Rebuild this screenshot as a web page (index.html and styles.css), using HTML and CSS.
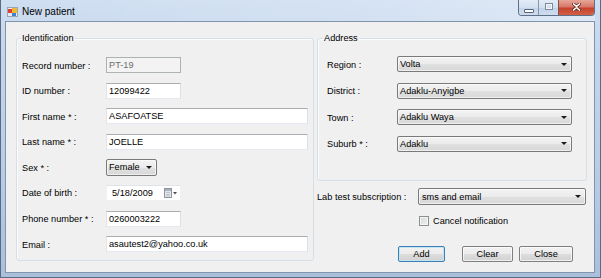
FILE: index.html
```html
<!DOCTYPE html>
<html>
<head>
<meta charset="utf-8">
<title>New patient</title>
<link rel="stylesheet" href="styles.css">
</head>
<body>
<div class="window">
  <div class="titlebar">
    <svg class="app-icon" width="11" height="10" viewBox="0 0 11 10">
      <rect x="0.5" y="0.5" width="10" height="9" fill="#e8ecf2" stroke="#9aa6b6"/>
      <rect x="1" y="2" width="4" height="4" fill="#e0412f"/>
      <rect x="5" y="1" width="5" height="5" fill="#f3b634"/>
      <rect x="5" y="6" width="4" height="3" fill="#3f7fd4"/>
    </svg>
    <span class="title">New patient</span>
    <div class="caption">
      <div class="cb cb-min"><span class="g-min"></span></div>
      <div class="cb cb-max"><span class="g-max"></span></div>
      <div class="cb cb-close">
        <svg width="9" height="8" viewBox="0 0 9 8">
          <path d="M1 0.5 L4.5 3.5 L8 0.5 M1 7.5 L4.5 4.5 L8 7.5" stroke="#5a2a22" stroke-width="3" fill="none" stroke-linecap="square"/>
          <path d="M1 0.5 L4.5 3.5 L8 0.5 M1 7.5 L4.5 4.5 L8 7.5" stroke="#ffffff" stroke-width="1.6" fill="none"/>
        </svg>
      </div>
    </div>
  </div>
  <div class="client">
    <fieldset class="group group-id">
      <legend>Identification</legend>
      <div class="form form-id">
        <span class="lbl">Record number :</span>
        <div class="tb tb-disabled w-short">PT-19</div>
        <span class="lbl">ID number :</span>
        <div class="tb w-short">12099422</div>
        <span class="lbl">First name * :</span>
        <div class="tb w-long">ASAFOATSE</div>
        <span class="lbl">Last name * :</span>
        <div class="tb w-long">JOELLE</div>
        <span class="lbl">Sex * :</span>
        <div class="combo w-sex"><span class="combo-text">Female</span><span class="arrow"></span></div>
        <span class="lbl">Date of birth :</span>
        <div class="dtp w-short">
          <span class="dtp-text">5/18/2009</span>
          <svg class="cal" width="14" height="10" viewBox="0 0 14 10">
            <rect x="0.5" y="0.5" width="7" height="9" fill="#e4e6ea" stroke="#8c939c"/>
            <rect x="1" y="1" width="6" height="2" fill="#a8b0ba"/>
            <path d="M2 4.5 H6 M2 6.5 H6 M2 8 H6" stroke="#b6bcc4" stroke-width="0.8"/>
            <path d="M9 4 L13 4 L11 6.5 Z" fill="#4d4d4d"/>
          </svg>
        </div>
        <span class="lbl">Phone number * :</span>
        <div class="tb w-short">0260003222</div>
        <span class="lbl">Email :</span>
        <div class="tb w-long">asautest2@yahoo.co.uk</div>
      </div>
    </fieldset>

    <div class="right-col">
      <fieldset class="group group-addr">
        <legend>Address</legend>
        <div class="form form-addr">
          <span class="lbl">Region :</span>
          <div class="combo w-addr"><span class="combo-text">Volta</span><span class="arrow"></span></div>
          <span class="lbl">District :</span>
          <div class="combo w-addr"><span class="combo-text">Adaklu-Anyigbe</span><span class="arrow"></span></div>
          <span class="lbl">Town :</span>
          <div class="combo w-addr"><span class="combo-text">Adaklu Waya</span><span class="arrow"></span></div>
          <span class="lbl">Suburb * :</span>
          <div class="combo w-addr"><span class="combo-text">Adaklu</span><span class="arrow"></span></div>
        </div>
      </fieldset>

      <div class="lab-row">
        <span class="lbl lab-lbl">Lab test subscription :</span>
        <div class="combo w-lab"><span class="combo-text">sms and email</span><span class="arrow"></span></div>
      </div>

      <div class="check-row">
        <span class="checkbox"></span>
        <span class="check-text">Cancel notification</span>
      </div>

      <div class="button-row">
        <div class="btn btn-default btn-add">Add</div>
        <div class="btn btn-clear">Clear</div>
        <div class="btn btn-close">Close</div>
      </div>
    </div>
  </div>
</div>
</body>
</html>
```

FILE: styles.css
```css
* { box-sizing: border-box; }

html, body {
  margin: 0;
  padding: 0;
}

body {
  width: 601px;
  height: 278px;
  overflow: hidden;
  background: #ffffff;
  font-family: "Liberation Sans", Arial, sans-serif;
  font-size: 9.2px;
  color: #000000;
}

/* ---------- window frame ---------- */
.window {
  width: 601px;
  height: 278px;
  display: flex;
  flex-direction: column;
  border: 1px solid #5b6b82;
  border-top: none;
  padding: 0 5px 4px 4px;
  background: linear-gradient(to bottom, #cfdef1 0%, #c3d6ed 20%, #b9cde7 60%, #a9bfdc 100%);
}

.titlebar {
  height: 21px;
  flex-shrink: 0;
  display: flex;
  align-items: flex-start;
  background: linear-gradient(to right, rgba(255,255,255,0) 0%, rgba(255,255,255,0.15) 60%, rgba(255,255,255,0.35) 100%);
}

.app-icon {
  margin: 7px 0 0 2px;
  flex-shrink: 0;
}

.title {
  margin: 5px 0 0 4px;
  font-size: 10px;
  line-height: 13px;
  color: #000000;
}

.caption {
  margin-left: auto;
  display: flex;
  height: 16px;
  border: 1px solid #5e6f88;
  border-top: none;
  border-radius: 0 0 4px 4px;
  overflow: hidden;
}

.cb {
  height: 100%;
  display: flex;
  justify-content: center;
}

.cb-min {
  width: 20px;
  background: linear-gradient(to bottom, #e3ecf7 0%, #d3e0f0 50%, #c3d3e9 51%, #cfdcee 100%);
  border-right: 1px solid #8797ad;
}

.cb-max {
  width: 20px;
  background: linear-gradient(to bottom, #e3ecf7 0%, #d3e0f0 50%, #c3d3e9 51%, #cfdcee 100%);
  border-right: 1px solid #7a5650;
}

.cb-close {
  width: 35px;
  background: linear-gradient(to bottom, #e6a697 0%, #d8776a 45%, #c5432e 55%, #d35f45 100%);
  align-items: flex-start;
  padding-top: 3px;
}

.g-min {
  margin-top: 9px;
  width: 10px;
  height: 4px;
  background: #ffffff;
  border: 1px solid #56657b;
  border-radius: 1px;
}

.g-max {
  margin-top: 3px;
  width: 8px;
  height: 7px;
  border: 1px solid #7c8aa0;
  box-shadow: inset 0 0 0 1px #f3f6fa;
  background: #d7e1ee;
}

/* ---------- client ---------- */
.client {
  flex: 1;
  display: grid;
  grid-template-columns: 298px 270px;
  column-gap: 3px;
  align-items: start;
  padding: 11px 7px 0 10px;
  background: #f0f0f0;
  border: 1px solid #8294ab;
}

.group {
  margin: 0;
  padding: 0;
  min-width: 0;
  border: 1px solid #d5dfe5;
  border-radius: 3px;
  box-shadow: inset 1px 1px 0 #fbfcfd;
}

.group legend {
  padding: 0 1px;
  font-size: 9.2px;
  line-height: 11px;
  color: #000000;
}

.group-id {
  height: 228px;
}

.group-id legend {
  margin-left: 4px;
}

.group-addr {
  height: 148px;
}

.group-addr legend {
  margin-left: 5px;
}

.form {
  display: grid;
  align-items: center;
}

.form-id {
  grid-template-columns: 84px auto;
  grid-auto-rows: 16px;
  row-gap: 9.6px;
  padding: 13px 0 0 5px;
}

.form-addr {
  grid-template-columns: 70px auto;
  grid-auto-rows: 16px;
  row-gap: 10.6px;
  padding: 12px 0 0 9px;
}

.lbl {
  line-height: 11px;
  padding-top: 2px;
  white-space: nowrap;
}

/* ---------- text boxes ---------- */
.tb {
  height: 16px;
  border: 1px solid;
  border-color: #abadb3 #dbdfe6 #e3e9ef #e2e3ea;
  background: #ffffff;
  padding: 1px 2px 0 2px;
  line-height: 13px;
  white-space: nowrap;
  overflow: hidden;
}

.tb-disabled {
  background: #f3f3f3;
  border-color: #adb2b5;
  color: #6d6d6d;
}

.w-short { width: 75px; }
.w-long { width: 202px; }
.w-sex { width: 51px; }
.w-addr { width: 175px; }
.w-lab { width: 168px; }

/* ---------- combos ---------- */
.combo {
  height: 16px;
  display: flex;
  align-items: center;
  border: 1px solid #7a7a7a;
  border-radius: 2px;
  background: linear-gradient(to bottom, #f3f3f3 0%, #ebebeb 50%, #e0e0e0 51%, #d8d8d8 100%);
  box-shadow: inset 0 0 0 1px rgba(255,255,255,0.6);
  padding: 1px 4px 0 2px;
}

.w-sex {
  height: 17px;
}

.w-lab {
  height: 17px;
  padding-left: 3px;
}

.combo-text {
  flex: 1;
  line-height: 13px;
  white-space: nowrap;
  overflow: hidden;
}

.arrow {
  width: 0;
  height: 0;
  border-left: 3px solid transparent;
  border-right: 3px solid transparent;
  border-top: 3px solid #1a1a1a;
  margin-top: -1px;
}

/* ---------- date picker ---------- */
.dtp {
  height: 16px;
  display: flex;
  align-items: center;
  border: 1px solid;
  border-color: #dfe3e8 #eef0f3 #eef0f3 #eef0f3;
  background: #ffffff;
  padding: 1px 2px 0 5px;
}

.dtp-text {
  flex: 1;
  line-height: 13px;
}

.cal {
  margin-top: -1px;
}

/* ---------- right column ---------- */
.right-col {
  display: flex;
  flex-direction: column;
}

.lab-row {
  margin-top: 7px;
  height: 17px;
  display: flex;
  align-items: center;
}

.lab-lbl {
  width: 101px;
}

.check-row {
  margin-top: 10px;
  height: 11px;
  display: flex;
  align-items: center;
  padding-left: 102px;
}

.checkbox {
  width: 10px;
  height: 10px;
  border: 1px solid #8e8f8f;
  background: linear-gradient(135deg, #d4d6da 0%, #f2f2f2 100%);
  box-shadow: inset 0 0 0 1px #f4f4f4;
}

.check-text {
  margin-left: 4px;
  line-height: 11px;
  padding-top: 1px;
}

.button-row {
  margin-top: 20px;
  height: 16px;
  display: flex;
}

.btn {
  height: 16px;
  display: flex;
  align-items: center;
  justify-content: center;
  border: 1px solid #7f7f7f;
  border-radius: 2px;
  background: linear-gradient(to bottom, #f2f2f2 0%, #ebebeb 50%, #dddddd 51%, #d1d1d1 100%);
  box-shadow: inset 0 0 0 1px rgba(255,255,255,0.7);
  line-height: 11px;
  padding-top: 1px;
}

.btn-default {
  border-color: #3c7fb1;
  box-shadow: inset 0 0 0 1px #c3e3f6;
}

.btn-add {
  width: 47px;
  margin-left: 81px;
}

.btn-clear {
  width: 51px;
  margin-left: 17px;
}

.btn-close {
  width: 54px;
  margin-left: 6px;
}
```
